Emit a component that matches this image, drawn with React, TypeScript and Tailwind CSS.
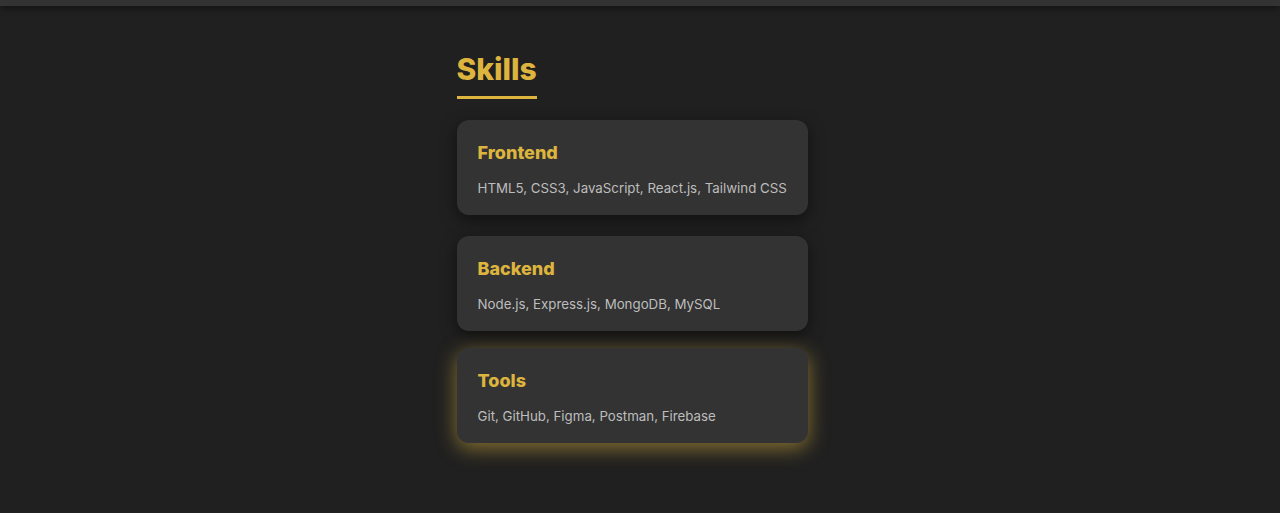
const skills = [
  { title: "Frontend", items: "HTML5, CSS3, JavaScript, React.js, Tailwind CSS" },
  { title: "Backend", items: "Node.js, Express.js, MongoDB, MySQL" },
  { title: "Tools", items: "Git, GitHub, Figma, Postman, Firebase", active: true },
];

const App: React.FC = () => {
  return (
    <div
      className="min-h-screen bg-[#202020]"
      style={{ fontFamily: "Inter, 'Noto Sans', sans-serif" }}
    >
      {/* Top bar */}
      <div className="h-[6px] bg-[#333333] shadow-[0_2px_6px_rgba(0,0,0,0.5)]"></div>

      <div className="flex justify-center pr-4">
        <section className="w-[351px] pt-[43px] pb-16">
          {/* Heading */}
          <h2 className="text-[30px] leading-[40px] font-extrabold text-[#dcb43e]">Skills</h2>
          <div className="mt-[7px] h-[3px] w-20 bg-[#dcb43e]"></div>

          {/* Cards */}
          <div className="mt-[21px] flex flex-col gap-[21px]">
            {skills.map((s) => (
              <div
                key={s.title}
                className={
                  s.active
                    ? "rounded-xl bg-[#333333] px-[21px] pt-[22px] pb-4 -translate-y-1 shadow-[0_5px_20px_rgba(220,180,62,0.55)]"
                    : "rounded-xl bg-[#333333] px-[21px] pt-[22px] pb-4 shadow-[0_5px_16px_rgba(0,0,0,0.5)]"
                }
              >
                <h3 className="text-[18px] leading-[22px] font-extrabold text-[#dcb43e]">{s.title}</h3>
                <p className="mt-[14px] whitespace-nowrap text-[13.3px] leading-[21px] text-[#bdbdbd]">
                  {s.items}
                </p>
              </div>
            ))}
          </div>
        </section>
      </div>
    </div>
  );
};

export default App;
